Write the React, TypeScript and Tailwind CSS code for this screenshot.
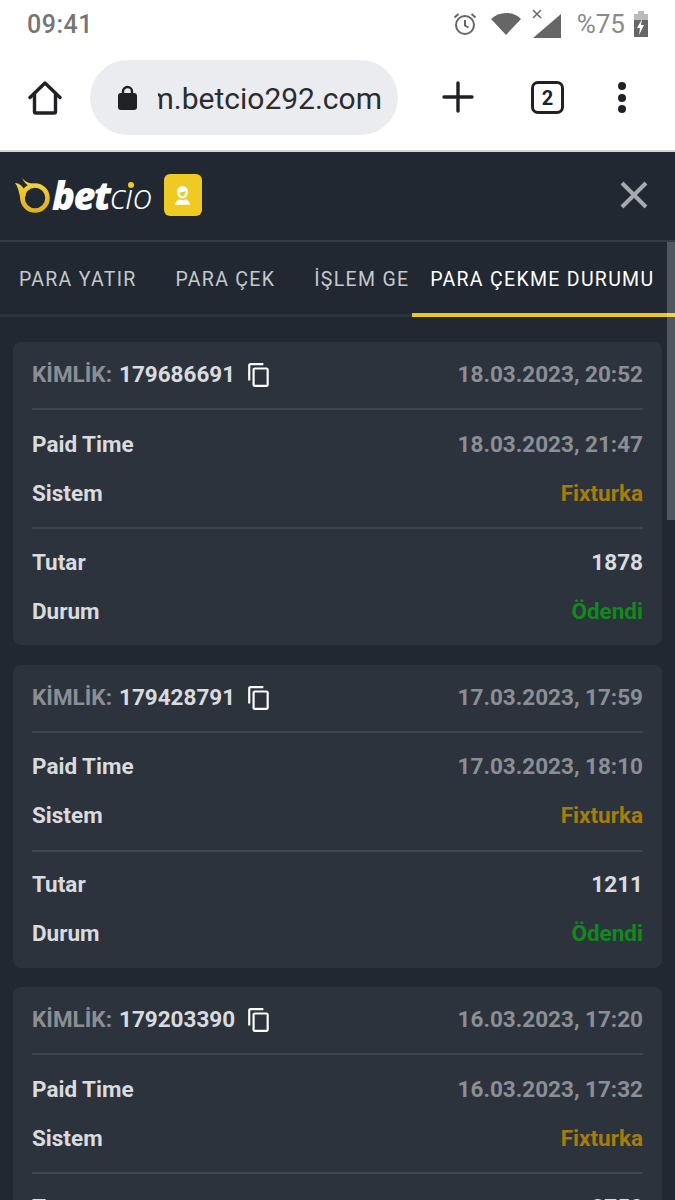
const orders = [
  { id: '179686691', created: '18.03.2023, 20:52', paid: '18.03.2023, 21:47', amount: '1878' },
  { id: '179428791', created: '17.03.2023, 17:59', paid: '17.03.2023, 18:10', amount: '1211' },
  { id: '179203390', created: '16.03.2023, 17:20', paid: '16.03.2023, 17:32', amount: '2750' },
];

const StatusBar = () => (
  <div className="flex h-[48px] items-center justify-between pl-[27px] pr-[27px] text-[#6e6e6e]">
    <span className="text-[25px] font-medium leading-none tracking-[0.5px] text-[#757575]">09:41</span>
    <div className="flex items-center">
      <svg width="26" height="26" viewBox="0 0 26 26" fill="none" stroke="#666" strokeWidth="2">
        <circle cx="13" cy="14" r="9" />
        <path d="M13 9v5.5l3.5 2" />
        <path d="M2.5 6.5l4-3.5M23.5 6.5l-4-3.5" />
      </svg>
      <svg className="ml-[13px]" width="30" height="24" viewBox="0 0 30 24" fill="#666">
        <path d="M0 7C8-1 22-1 30 7L15 23Z" />
      </svg>
      <svg className="ml-[10px]" width="31" height="30" viewBox="0 0 31 30" fill="#666">
        <path d="M30 5V29H2Z" />
        <path d="M2 1l8 8M10 1L2 9" stroke="#666" strokeWidth="1.5" fill="none" />
      </svg>
      <span className="ml-[15px] text-[26px] leading-none text-[#8a8a8a]">%75</span>
      <svg className="ml-[9px]" width="14" height="26" viewBox="0 0 14 26">
        <path d="M4 0h6v3h4v23H0V3h4Z" fill="#bbb" />
        <path d="M0 9h14v17H0Z" fill="#666" />
        <path d="M8 8L3 17h3l-1 7 5-10H7Z" fill="#fff" />
      </svg>
    </div>
  </div>
);

const BrowserBar = () => (
  <div className="flex h-[104px] items-start border-b-2 border-[#d4d4d4] pl-[28px] pt-[12px]">
    <svg className="mt-[21px] shrink-0" width="34" height="34" viewBox="0 0 34 34" fill="none" stroke="#202124" strokeWidth="3.4" strokeLinejoin="round" strokeLinecap="round">
      <path d="M2 16.5L17 2l15 14.5" />
      <path d="M6.5 13v17.5a1.5 1.5 0 0 0 1.5 1.5h18a1.5 1.5 0 0 0 1.5-1.5V13" />
    </svg>
    <div className="ml-[28px] flex h-[75px] w-[308px] shrink-0 items-center rounded-full bg-[#ebecf0] pl-[28px]">
      <svg width="19" height="25" viewBox="0 0 19 25" className="shrink-0">
        <path d="M5 9V6.5a4.5 4.5 0 0 1 9 0V9" fill="none" stroke="#202124" strokeWidth="2.4" />
        <rect x="0" y="8" width="19" height="17" rx="3" fill="#202124" />
      </svg>
      <div className="ml-[21px] flex w-[224px] justify-end overflow-hidden pt-[3px]">
        <span className="shrink-0 whitespace-nowrap text-[30px] leading-none text-[#2b2c30]">m.betcio292.com</span>
      </div>
    </div>
    <svg className="ml-[44px] mt-[21px] shrink-0" width="32" height="32" viewBox="0 0 32 32" stroke="#202124" strokeWidth="3.4" strokeLinecap="round">
      <path d="M2 16h28M16 2v28" />
    </svg>
    <div className="ml-[57px] mt-[21px] flex size-[33px] shrink-0 items-center justify-center rounded-[7px] border-[3.5px] border-[#202124] text-[20px] font-bold leading-none text-[#202124]">
      2
    </div>
    <div className="ml-[54px] mt-[22px] flex flex-col gap-[3.5px]">
      <span className="size-[8px] rounded-full bg-[#202124]" />
      <span className="size-[8px] rounded-full bg-[#202124]" />
      <span className="size-[8px] rounded-full bg-[#202124]" />
    </div>
  </div>
);

const Logo = () => (
  <div className="flex items-center">
    <svg width="36" height="36" viewBox="0 0 36 36" className="shrink-0" fill="none">
      <defs>
        <linearGradient id="flame" x1="0" y1="0" x2="0" y2="36" gradientUnits="userSpaceOnUse">
          <stop offset="0" stopColor="#f7d93f" />
          <stop offset="1" stopColor="#dcae1e" />
        </linearGradient>
      </defs>
      <circle cx="20" cy="21" r="12.5" stroke="url(#flame)" strokeWidth="4.5" />
      <path d="M0 6C5 6 9 10 11 17L8 28C4 22 5 12 0 6Z" fill="url(#flame)" />
      <path d="M7 0C9 5 14 6.500 22 7.500L25 9.500C16 11 9 8 7 0Z" fill="url(#flame)" />
    </svg>
    <span className="ml-[1px] font-['Open_Sans',sans-serif] text-[38px] font-extrabold italic leading-none tracking-[-1.5px] text-white">bet</span>
    <span className="relative font-['Open_Sans',sans-serif] text-[35px] font-light italic leading-none tracking-[-0.5px] text-white">
      cio
      <span className="absolute left-[18px] top-[4px] size-[6px] rounded-full bg-[#eeca22]" />
    </span>
  </div>
);

const Row = ({ label, value, tone }: { label: string; value: string; tone: string }) => (
  <div className="flex h-[49px] items-center justify-between">
    <span className="text-[#d9dbde]">{label}</span>
    <span className={tone}>{value}</span>
  </div>
);

const CopyIcon = () => (
  <svg className="ml-[11px]" width="26" height="26" viewBox="0 0 24 24" fill="#fff">
    <path d="M16 1H4c-1.1 0-2 .9-2 2v14h2V3h12V1zm3 4H8c-1.1 0-2 .9-2 2v14c0 1.1.9 2 2 2h11c1.1 0 2-.9 2-2V7c0-1.1-.9-2-2-2zm0 16H8V7h11v14z" />
  </svg>
);

const Card = ({ order }: { order: (typeof orders)[number] }) => (
  <div className="rounded-[8px] bg-[#2d333d] px-[19px] text-[22.5px] font-bold">
    <div className="flex h-[68px] items-center justify-between border-b-2 border-[#3f454f]">
      <div className="flex items-center">
        <span className="text-[#8b8f95]">KİMLİK:</span>
        <span className="ml-[7px] text-[#d9dbde]">{order.id}</span>
        <CopyIcon />
      </div>
      <span className="text-[#8b8f95]">{order.created}</span>
    </div>
    <div className="border-b-2 border-[#3f454f] pb-[9px] pt-[10px]">
      <Row label="Paid Time" value={order.paid} tone="text-[#8b8f95]" />
      <Row label="Sistem" value="Fixturka" tone="text-[#a67c0c]" />
    </div>
    <div className="py-[9px]">
      <Row label="Tutar" value={order.amount} tone="text-[#d9dbde]" />
      <Row label="Durum" value="Ödendi" tone="text-[#0f8a1c]" />
    </div>
  </div>
);

export default function App() {
  return (
    <div className="h-[1200px] w-[675px] overflow-hidden bg-white font-['Roboto',sans-serif]">
      <StatusBar />
      <BrowserBar />
      <div className="relative h-[1048px] bg-[#212832]">
        <div className="flex h-[88px] items-center justify-between pb-[2px] pl-[15px] pr-[27px]">
          <div className="flex items-center">
            <Logo />
            <div className="ml-[12px] flex h-[42px] w-[38px] items-center justify-center rounded-[6px] bg-[#eeca22]">
              <svg width="17" height="21" viewBox="0 0 22 26" fill="#fff">
                <path d="M11 1c5 0 7 3.500 7 7.500 0 4-3 8.500-7 8.500s-7-4.500-7-8.500C4 4.500 6 1 11 1Z" />
                <path d="M7 9c2 .5 6-.5 8-2 .5 4-2 7-4 7S7 12 7 9Z" fill="#eeca22" />
                <path d="M7 18c2.500 1.500 5.500 1.500 8 0 3 1 5 3.500 6 7H1c1-3.500 3-6 6-7Z" />
              </svg>
            </div>
          </div>
          <svg width="28" height="28" viewBox="0 0 28 28" stroke="#a6a9ad" strokeWidth="4">
            <path d="M2 2l24 24M26 2L2 26" />
          </svg>
        </div>
        <div className="relative flex h-[77px] items-center overflow-hidden border-b-[3px] border-t-2 border-b-[#2d333d] border-t-[#363c47] pt-[3px] text-[19.5px] tracking-[1.3px] text-[#c5c8cc]">
          <span className="ml-[19px] shrink-0 whitespace-nowrap">PARA YATIR</span>
          <span className="ml-[39px] shrink-0 whitespace-nowrap">PARA ÇEK</span>
          <span className="ml-[39px] w-[95px] shrink-0 overflow-hidden whitespace-nowrap">İŞLEM GEÇMİŞİ</span>
          <span className="ml-[21px] shrink-0 whitespace-nowrap text-white">PARA ÇEKME DURUMU</span>
        </div>
        <div className="absolute left-[412px] top-[161px] h-[4px] w-[263px] bg-[#edc724]" />
        <div className="flex flex-col gap-[19.5px] px-[13px] pt-[25px]">
          {orders.map((order) => (
            <Card key={order.id} order={order} />
          ))}
        </div>
        <div className="absolute right-0 top-[90px] h-[278px] w-[8px] bg-[#ffffff38]" />
      </div>
    </div>
  );
}
